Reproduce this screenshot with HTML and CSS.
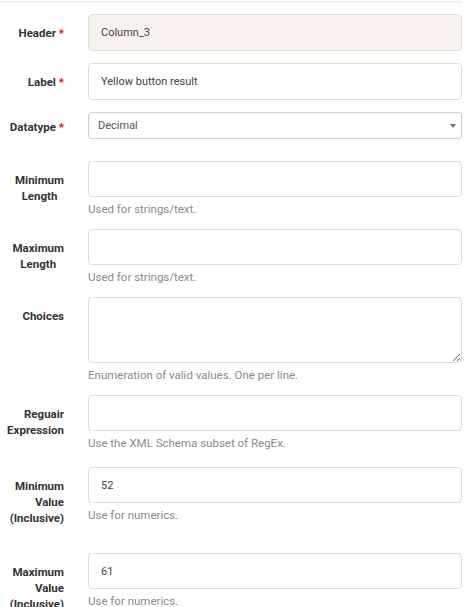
FILE: index.html
```html
<!DOCTYPE html>
<html>
<head>
<meta charset="utf-8">
<link rel="stylesheet" href="styles.css">
</head>
<body>
<div class="page">
  <div class="topline"></div>
  <form class="form">
    <div class="row">
      <label class="lbl"><span>Header <b class="req">*</b></span></label>
      <div class="field"><input class="inp inp-ro" type="text" value="Column_3" readonly></div>
    </div>
    <div class="row">
      <label class="lbl"><span>Label <b class="req">*</b></span></label>
      <div class="field"><input class="inp" type="text" value="Yellow button result"></div>
    </div>
    <div class="row row-select">
      <label class="lbl lbl-select"><span>Datatype <b class="req">*</b></span></label>
      <div class="field">
        <div class="select-wrap">
          <select class="sel"><option>Decimal</option></select>
        </div>
      </div>
    </div>
    <div class="row">
      <label class="lbl"><span class="center">Minimum<br>Length</span></label>
      <div class="field"><input class="inp inp-sm" type="text"><div class="help">Used for strings/text.</div></div>
    </div>
    <div class="row">
      <label class="lbl"><span class="center">Maximum<br>Length</span></label>
      <div class="field"><input class="inp inp-sm" type="text"><div class="help">Used for strings/text.</div></div>
    </div>
    <div class="row">
      <label class="lbl"><span>Choices</span></label>
      <div class="field"><textarea class="ta"></textarea><div class="help">Enumeration of valid values. One per line.</div></div>
    </div>
    <div class="row">
      <label class="lbl lbl-two"><span>Reguair<br>Expression</span></label>
      <div class="field"><input class="inp inp-sm" type="text"><div class="help">Use the XML Schema subset of RegEx.</div></div>
    </div>
    <div class="row">
      <label class="lbl lbl-three"><span>Minimum<br>Value<br>(Inclusive)</span></label>
      <div class="field"><input class="inp inp-sm" type="text" value="52"><div class="help">Use for numerics.</div></div>
    </div>
    <div class="row">
      <label class="lbl lbl-three"><span>Maximum<br>Value<br>(Inclusive)</span></label>
      <div class="field"><input class="inp inp-sm" type="text" value="61"><div class="help">Use for numerics.</div></div>
    </div>
  </form>
</div>
</body>
</html>
```
FILE: styles.css
```css
* { box-sizing: border-box; }
html, body { margin: 0; padding: 0; background: #fff; }
body {
  font-family: Roboto, "Liberation Sans", sans-serif;
  color: #333;
  overflow: hidden;
}
.page { padding: 1px 9px 0 0; }
.topline { height: 2px; background: #f0f0f0; }
.form { padding-top: 11px; }
.row {
  display: flex;
  align-items: flex-start;
  gap: 24px;
  margin-bottom: 12px;
}
.row-select { min-height: 37px; }
.lbl {
  flex: 0 0 64px;
  display: flex;
  justify-content: flex-end;
  padding-top: 11px;
  font-size: 11.5px;
  font-weight: 700;
  line-height: 16px;
  color: #333;
  text-align: right;
}
.lbl-select { padding-top: 7px; }
.lbl-two { padding-bottom: 17px; }
.lbl-three { padding-bottom: 15px; }
.lbl .center { display: inline-block; text-align: center; }
.req { color: #e00; font-weight: 700; }
.field { flex: 1; min-width: 0; }
.inp {
  display: block;
  width: 100%;
  height: 37px;
  border: 1px solid #e3dccf;
  border-radius: 4px;
  background: #fff;
  padding: 0 12px;
  font-family: Roboto, "Liberation Sans", sans-serif;
  font-size: 11px;
  color: #444;
  outline: none;
}
.inp-sm { height: 36px; }
.inp-ro { background: #f6f3ee; }
.ta {
  display: block;
  width: 100%;
  height: 66px;
  border: 1px solid #e3dccf;
  border-radius: 4px;
  background: #fff;
  resize: vertical;
  font-family: Roboto, "Liberation Sans", sans-serif;
  font-size: 11px;
  outline: none;
}
.select-wrap { position: relative; }
.select-wrap::after {
  content: "";
  position: absolute;
  right: 6px;
  top: 12px;
  border-left: 3px solid transparent;
  border-right: 3px solid transparent;
  border-top: 4px solid #777;
  pointer-events: none;
}
.sel {
  display: block;
  width: 100%;
  height: 27px;
  -webkit-appearance: none;
  appearance: none;
  border: 1px solid #cfcfcf;
  border-radius: 3px;
  background: #fff;
  padding: 0 9px;
  font-family: Roboto, "Liberation Sans", sans-serif;
  font-size: 11px;
  color: #555;
  outline: none;
}
.help {
  margin-top: 4px;
  font-size: 11.5px;
  line-height: 16px;
  color: #8a8a8a;
}
```
